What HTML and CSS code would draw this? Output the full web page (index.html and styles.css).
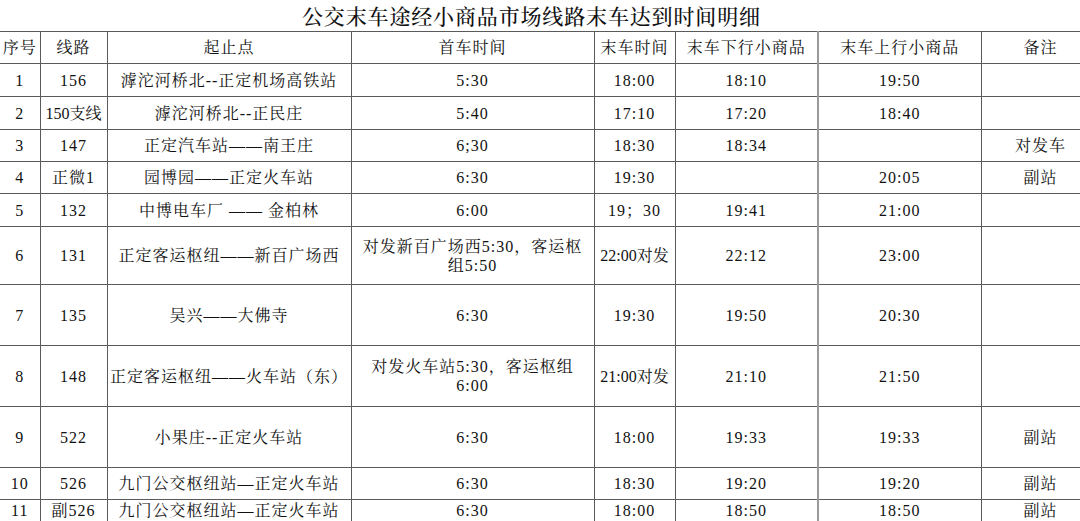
FILE: index.html
```html
<!DOCTYPE html>
<html lang="zh-CN">
<head>
<meta charset="utf-8">
<title>公交末车途经小商品市场线路末车达到时间明细</title>
<link rel="stylesheet" href="styles.css">
</head>
<body>
<div class="page">
  <div class="title-bar">
    <h1 class="title">公交末车途经小商品市场线路末车达到时间明细</h1>
  </div>
  <table class="sched">
    <colgroup>
      <col class="c1"><col class="c2"><col class="c3"><col class="c4"><col class="c5"><col class="c6"><col class="c7"><col class="c8">
    </colgroup>
    <tbody>
      <tr class="h32">
        <td>序号</td><td>线路</td><td>起止点</td><td>首车时间</td><td>末车时间</td><td class="up">末车下行小商品</td><td>末车上行小商品</td><td>备注</td>
      </tr>
      <tr class="h33">
        <td>1</td><td>156</td><td>滹沱河桥北--正定机场高铁站</td><td>5:30</td><td>18:00</td><td class="up">18:10</td><td>19:50</td><td></td>
      </tr>
      <tr class="h33">
        <td>2</td><td class="tight">150支线</td><td>滹沱河桥北--正民庄</td><td>5:40</td><td>17:10</td><td class="up">17:20</td><td>18:40</td><td></td>
      </tr>
      <tr class="h32">
        <td>3</td><td>147</td><td>正定汽车站——南王庄</td><td>6;30</td><td>18:30</td><td class="up">18:34</td><td></td><td>对发车</td>
      </tr>
      <tr class="h32">
        <td>4</td><td>正微1</td><td>园博园——正定火车站</td><td>6:30</td><td>19:30</td><td class="up"></td><td>20:05</td><td>副站</td>
      </tr>
      <tr class="h33">
        <td>5</td><td>132</td><td>中博电车厂 —— 金柏林</td><td>6:00</td><td>19；30</td><td class="up">19:41</td><td>21:00</td><td></td>
      </tr>
      <tr class="h58">
        <td>6</td><td>131</td><td>正定客运枢纽——新百广场西</td><td class="wrap">对发新百广场西5:30，客运枢组5:50</td><td class="tight">22:00对发</td><td class="up">22:12</td><td>23:00</td><td></td>
      </tr>
      <tr class="h60">
        <td>7</td><td>135</td><td>吴兴——大佛寺</td><td>6:30</td><td>19:30</td><td class="up">19:50</td><td>20:30</td><td></td>
      </tr>
      <tr class="h60">
        <td>8</td><td>148</td><td>正定客运枢纽——火车站（东）</td><td class="wrap">对发火车站5:30，客运枢组6:00</td><td class="tight">21:00对发</td><td class="up">21:10</td><td>21:50</td><td></td>
      </tr>
      <tr class="h60">
        <td>9</td><td>522</td><td>小果庄--正定火车站</td><td>6:30</td><td>18:00</td><td class="up">19:33</td><td>19:33</td><td>副站</td>
      </tr>
      <tr class="h32">
        <td>10</td><td>526</td><td>九门公交枢纽站—正定火车站</td><td>6:30</td><td>18:30</td><td class="up">19:20</td><td>19:20</td><td>副站</td>
      </tr>
      <tr class="h22">
        <td>11</td><td>副526</td><td>九门公交枢纽站—正定火车站</td><td>6:30</td><td>18:00</td><td class="up">18:50</td><td>18:50</td><td>副站</td>
      </tr>
    </tbody>
  </table>
</div>
</body>
</html>
```
FILE: styles.css
```css
html, body {
  margin: 0;
  padding: 0;
  background: #ffffff;
}
body {
  width: 1080px;
  height: 521px;
  overflow: hidden;
  font-family: "Liberation Serif", "Noto Serif CJK SC", "Noto Sans CJK SC", serif;
  color: #111111;
}
.page {
  width: 1080px;
  overflow: hidden;
}
.title-bar {
  display: flex;
  justify-content: center;
  height: 31px;
  padding-right: 18px;
}
.title {
  margin: 0;
  width: 458px;
  line-height: 35px;
  font-size: 21px;
  font-weight: 500;
  text-align: justify;
  text-align-last: justify;
  color: #111;
  white-space: nowrap;
}
.sched {
  border-collapse: collapse;
  table-layout: fixed;
  width: 1100px;
  font-size: 16px;
  letter-spacing: 1px;
}
.c1 { width: 40px; }
.c2 { width: 67px; }
.c3 { width: 244px; }
.c4 { width: 243px; }
.c5 { width: 81px; }
.c6 { width: 143px; }
.c7 { width: 163px; }
.c8 { width: 119px; }
.sched td {
  border: 1px solid #5a5a5a;
  text-align: center;
  vertical-align: middle;
  padding: 0 2px;
  line-height: 19px;
  white-space: nowrap;
  overflow: hidden;
}
.sched td:first-child {
  border-left: none;
}
.sched td.up {
  border-right: 2px solid #9a9a9a;
}
.sched td.tight {
  letter-spacing: 0;
  padding: 0;
}
.sched td.wrap {
  white-space: normal;
  padding: 0 10px;
}
.h22 td { height: 21px; }
.h32 td { height: 31px; }
.h33 td { height: 32px; }
.h58 td { height: 57px; }
.h60 td { height: 60px; }
```
